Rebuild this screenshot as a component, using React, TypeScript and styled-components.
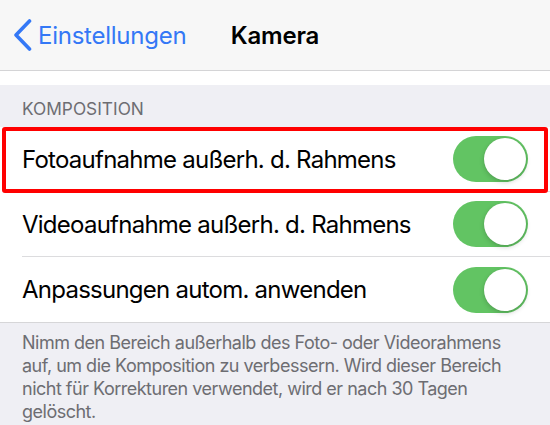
import React from "react";
import styled, { createGlobalStyle } from "styled-components";

const Global = createGlobalStyle`
  html, body { margin: 0; padding: 0; background: #efeff4; }
  body { font-family: Inter, "Noto Sans", "DejaVu Sans", sans-serif; -webkit-font-smoothing: antialiased; }
  #root { width: 550px; height: 425px; overflow: hidden; }
`;

const Page = styled.div`
  width: 550px;
  height: 425px;
  display: flex;
  flex-direction: column;
  background: #efeff4;
`;

const NavBar = styled.div`
  height: 70px;
  flex: 0 0 70px;
  background: #f7f7f7;
  border-bottom: 1px solid #d4d4d6;
  display: flex;
  align-items: center;
  position: relative;
`;

const BackButton = styled.div`
  display: flex;
  align-items: center;
  gap: 5px;
  padding-left: 13px;
  color: #3478f6;
  font-size: 24px;
  letter-spacing: -0.25px;
  height: 100%;
`;

const Title = styled.div`
  position: absolute;
  left: 0;
  right: 0;
  top: 0;
  bottom: 0;
  display: flex;
  align-items: center;
  justify-content: center;
  font-size: 24px;
  font-weight: 600;
  letter-spacing: -0.2px;
  color: #000;
  pointer-events: none;
`;

const Spacer = styled.div`
  height: 14px;
  flex: 0 0 14px;
  background: #ffffff;
`;

const SectionHeader = styled.div`
  height: 42px;
  flex: 0 0 42px;
  box-sizing: border-box;
  padding: 13px 22px 0;
  font-size: 17.3px;
  color: #6d6d72;
  letter-spacing: 0px;
`;

const Group = styled.div`
  background: #fff;
  border-bottom: 1px solid #d6d6d8;
  position: relative;
`;

const Row = styled.div<{ $last?: boolean }>`
  height: 65px;
  display: flex;
  align-items: center;
  justify-content: space-between;
  margin-left: 22px;
  padding-right: 22px;
  border-bottom: ${(p) => (p.$last ? "none" : "1px solid #dcdcde")};
  box-sizing: border-box;
`;

const Label = styled.span`
  font-size: 24px;
  letter-spacing: -0.75px;
  color: #000;
`;

const Track = styled.div<{ $on: boolean }>`
  width: 75px;
  height: 46px;
  border-radius: 23px;
  background: ${(p) => (p.$on ? "#62c463" : "#e5e5ea")};
  position: relative;
  flex: 0 0 auto;
`;

const Knob = styled.div<{ $on: boolean }>`
  position: absolute;
  top: 2px;
  left: ${(p) => (p.$on ? "31px" : "2px")};
  width: 42px;
  height: 42px;
  border-radius: 50%;
  background: #fff;
  box-shadow: 0 2px 5px rgba(0, 0, 0, 0.18), 0 0 1px rgba(0, 0, 0, 0.12);
`;

const Highlight = styled.div`
  position: absolute;
  left: 2px;
  top: 0px;
  width: 546px;
  height: 66px;
  box-sizing: border-box;
  border: 4px solid #ff0000;
  border-radius: 3px;
  pointer-events: none;
`;

const Footer = styled.div`
  padding: 8px 28px 0 22px;
  font-size: 18px;
  letter-spacing: -0.5px;
  line-height: 23px;
  color: #6d6d72;
`;

const Chevron = () => (
  <svg width="20" height="32" viewBox="0 0 20 32">
    <path d="M16.5 2 L3 16 L16.5 30" fill="none" stroke="#3478f6" strokeWidth="3.6" strokeLinecap="round" strokeLinejoin="round" />
  </svg>
);

const Toggle = ({ on }: { on: boolean }) => (
  <Track $on={on}>
    <Knob $on={on} />
  </Track>
);

const rows = [
  "Fotoaufnahme außerh. d. Rahmens",
  "Videoaufnahme außerh. d. Rahmens",
  "Anpassungen autom. anwenden",
];

export default function App() {
  return (
    <Page>
      <Global />
      <NavBar>
        <BackButton>
          <Chevron />
          <span>Einstellungen</span>
        </BackButton>
        <Title>Kamera</Title>
      </NavBar>
      <Spacer />
      <SectionHeader>KOMPOSITION</SectionHeader>
      <Group>
        {rows.map((r, i) => (
          <Row key={r} $last={i === rows.length - 1}>
            <Label>{r}</Label>
            <Toggle on />
          </Row>
        ))}
        <Highlight />
      </Group>
      <Footer>
        Nimm den Bereich außerhalb des Foto- oder Videorahmens auf, um die Komposition zu verbessern. Wird dieser Bereich nicht für Korrekturen verwendet, wird er nach 30 Tagen gelöscht.
      </Footer>
    </Page>
  );
}
